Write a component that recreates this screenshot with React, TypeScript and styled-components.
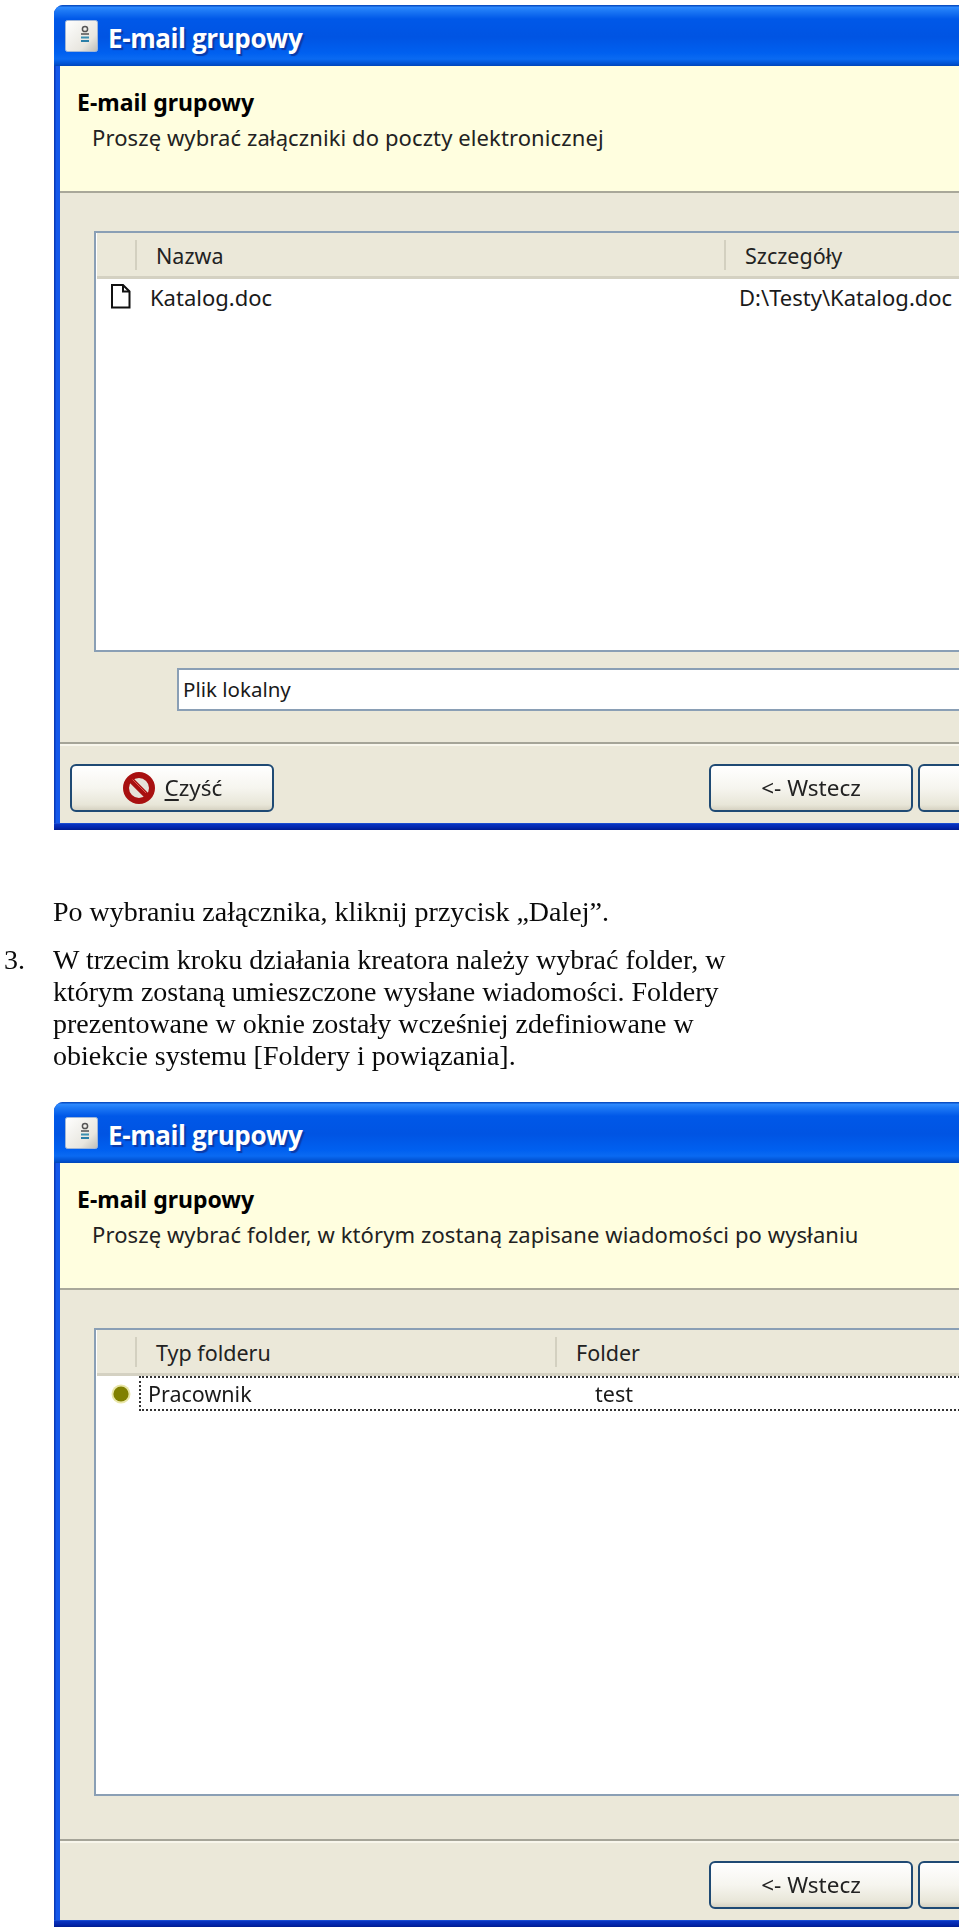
import React from "react";
import styled, { createGlobalStyle } from "styled-components";

const Global = createGlobalStyle`
  html, body { margin: 0; padding: 0; background: #fff; }
  #root { width: 960px; height: 1932px; overflow: hidden; }
`;

const Page = styled.div`
  width: 960px;
  padding-top: 5px;
`;

const Window = styled.section`
  width: 905px;
  height: 825px;
  margin-left: 54px;
  display: flex;
  flex-direction: column;
  overflow: hidden;
  border-radius: 9px 0 0 0;
  background: linear-gradient(90deg, #0a3ab8 0, #0a3ab8 1px, #1558ea 2px, #1558ea 6px);
  font-family: "Noto Sans", sans-serif;
  color: #111;
  filter: blur(0.35px);
`;

const TitleBar = styled.header`
  height: 61px;
  flex: none;
  display: flex;
  align-items: center;
  gap: 10px;
  padding: 1px 0 0 11px;
  box-sizing: border-box;
  background: linear-gradient(
    180deg,
    #0a4fc4 0,
    #0a4fc4 1px,
    #2f8bff 2px,
    #1c78f5 6px,
    #0058e8 14px,
    #0054e3 32px,
    #0060f0 48px,
    #0a6af2 54px,
    #0050d0 59px,
    #0046b8 61px
  );
`;

const TitleText = styled.h1`
  margin: 4px 0 0;
  font: 700 26px/1 "Open Sans", sans-serif;
  letter-spacing: -0.4px;
  color: #fff;
  text-shadow: 2px 2px 1px #0a3aa8;
`;

const Client = styled.div`
  flex: 1;
  min-height: 0;
  display: flex;
  flex-direction: column;
  margin-left: 6px;
  background: #ebe8d9;
`;

const BottomEdge = styled.div`
  height: 7px;
  flex: none;
  background: linear-gradient(180deg, #2a62e0 0, #0a35c0 1px, #0428b0 4px, #001c90 7px);
`;

const Banner = styled.div`
  height: 127px;
  flex: none;
  box-sizing: border-box;
  padding: 23px 0 0 17px;
  background: #fffedf;
  border-bottom: 2px solid #a9a89a;
`;

const BannerTitle = styled.h2`
  margin: 0;
  font: 700 23px/26px "Noto Sans", sans-serif;
  color: #000;
`;

const BannerText = styled.p`
  margin: 9px 0 0 15px;
  font: 400 22px/26px "Noto Sans", sans-serif;
  letter-spacing: 0.1px;
  color: #222;
`;

const Body = styled.div<{ $bottom: number }>`
  flex: 1;
  min-height: 0;
  display: flex;
  flex-direction: column;
  padding: 38px 0 ${(p) => p.$bottom}px 34px;
  border-bottom: 2px solid #a5a498;
  width: 920px;
  box-sizing: border-box;
`;

const ListView = styled.div`
  flex: 1;
  min-height: 0;
  box-sizing: border-box;
  border: 2px solid #8a9fb5;
  border-right: 0;
  padding-left: 1px;
  background: #fff;
`;

const Row = styled.div<{ $cols: string }>`
  display: grid;
  grid-template-columns: ${(p) => p.$cols};
  align-items: center;
`;

const HeaderRow = styled(Row)`
  height: 43px;
  background: #ebe8d9;
  border-bottom: 3px solid #d4d1c2;
  box-sizing: content-box;
`;

const HeaderCell = styled.div`
  height: 30px;
  box-sizing: border-box;
  border-left: 2px solid #d3d0c0;
  padding-left: 19px;
  font: 400 21.5px/32px "Noto Sans", sans-serif;
  color: #222;
  white-space: nowrap;
`;

const HeaderBlank = styled.div`
  height: 30px;
`;

const BodyRow = styled(Row)`
  height: 35px;
  font: 400 22px/30px "Noto Sans", sans-serif;
  color: #1a1a1a;
  white-space: nowrap;
`;

const IconCell = styled.div`
  display: flex;
  justify-content: flex-start;
  padding-left: 14px;
`;

const TextCell = styled.div<{ $pad: number }>`
  padding-left: ${(p) => p.$pad}px;
`;

const FocusedCell = styled.div`
  border: 2px dotted #333;
  height: 35px;
  box-sizing: border-box;
  display: grid;
  grid-template-columns: 420px 1fr;
  align-items: center;
  margin-left: 4px;
  width: 900px;
  font-size: 21.5px;
`;

const Field = styled.div`
  height: 43px;
  flex: none;
  margin: 16px 0 0 83px;
  box-sizing: border-box;
  padding-left: 4px;
  background: #fff;
  border: 2px solid #8a9fb5;
  border-right: 0;
  font: 400 20.5px/39px "Noto Sans", sans-serif;
  color: #1a1a1a;
`;

const Footer = styled.div`
  height: 79px;
  flex: none;
  box-sizing: border-box;
  padding: 18px 0 0 10px;
  display: grid;
  grid-template-columns: 634px 204px 204px;
  column-gap: 5px;
  align-items: start;
  border-top: 2px solid #f8f6ec;
`;

const Button = styled.button<{ $col: number }>`
  grid-column: ${(p) => p.$col};
  width: 204px;
  height: 48px;
  padding: 0;
  display: flex;
  align-items: center;
  justify-content: center;
  gap: 9px;
  border: 2px solid #1f4a74;
  border-radius: 6px;
  background: linear-gradient(180deg, #ffffff 0, #f6f5ef 50%, #e8e6d8 88%, #d6d2c2 100%);
  font: 400 22.5px/1 "Noto Sans", sans-serif;
  color: #222;
`;

const Underlined = styled.span`
  text-decoration: underline;
  text-underline-offset: 3px;
`;

const Prose = styled.div`
  margin-top: 66px;
  height: 206px;
  font: 400 28px/32px "Liberation Serif", serif;
  color: #0a0a0a;
  filter: blur(0.3px);
`;

const Paragraph = styled.p`
  margin: 0 0 16px 53px;
`;

const Step = styled.div`
  display: grid;
  grid-template-columns: 53px 690px;
`;

const StepNumber = styled.span`
  padding-left: 4px;
`;

const AppIcon = () => (
  <svg width="33" height="32" viewBox="0 0 33 32">
    <defs>
      <linearGradient id="ai" x1="0" y1="0" x2="1" y2="1">
        <stop offset="0" stopColor="#ffffff" />
        <stop offset="0.7" stopColor="#e8e6df" />
        <stop offset="1" stopColor="#bdbdb8" />
      </linearGradient>
    </defs>
    <rect x="0.5" y="0.5" width="32" height="31" rx="2" fill="url(#ai)" stroke="#9fb6d8" />
    <circle cx="20" cy="9" r="2.6" fill="none" stroke="#555" strokeWidth="1.5" />
    <rect x="16" y="13" width="8" height="2" fill="#777" />
    <rect x="16" y="16.5" width="8" height="2" fill="#3b8fb0" />
    <rect x="16" y="20" width="8" height="2" fill="#2a7fa8" />
  </svg>
);

const FileIcon = () => (
  <svg width="20" height="25" viewBox="0 0 20 25">
    <path d="M1 1H12L18.5 7.5V23.5H1Z" fill="#fff" stroke="#111" strokeWidth="2" />
    <path d="M12 1V7.5H18.5" fill="none" stroke="#111" strokeWidth="2" />
  </svg>
);

const BanIcon = () => (
  <svg width="34" height="34" viewBox="0 0 34 34">
    <circle cx="17" cy="17" r="13" fill="#e6e2d8" stroke="#a81010" strokeWidth="6" />
    <path d="M8 8L26 26" stroke="#a81010" strokeWidth="6" />
    <path d="M10.5 8.5L24 22" stroke="#e05a50" strokeWidth="1" />
  </svg>
);

const BulletIcon = () => (
  <svg width="20" height="20" viewBox="0 0 20 20">
    <circle cx="10" cy="10" r="9.5" fill="#e9e6a8" />
    <circle cx="10" cy="10" r="7.6" fill="#808000" />
  </svg>
);

const WizardWindow: React.FC<{
  subtitle: string;
  children: React.ReactNode;
  clear?: boolean;
  bodyBottom: number;
}> = ({ subtitle, children, clear, bodyBottom }) => (
  <Window>
    <TitleBar>
      <AppIcon />
      <TitleText>E-mail grupowy</TitleText>
    </TitleBar>
    <Client>
      <Banner>
        <BannerTitle>E-mail grupowy</BannerTitle>
        <BannerText>{subtitle}</BannerText>
      </Banner>
      <Body $bottom={bodyBottom}>{children}</Body>
      <Footer>
        {clear && (
          <Button $col={1}>
            <BanIcon />
            <span>
              <Underlined>C</Underlined>zyść
            </span>
          </Button>
        )}
        <Button $col={2}>{"<- Wstecz"}</Button>
        <Button $col={3} />
      </Footer>
    </Client>
    <BottomEdge />
  </Window>
);

const FILE_COLS = "38px 589px 1fr";
const FOLDER_COLS = "38px 420px 1fr";

export default function App() {
  return (
    <Page>
      <Global />
      <WizardWindow subtitle="Proszę wybrać załączniki do poczty elektronicznej" clear bodyBottom={31}>
        <ListView>
          <HeaderRow $cols={FILE_COLS}>
            <HeaderBlank />
            <HeaderCell>Nazwa</HeaderCell>
            <HeaderCell>Szczegóły</HeaderCell>
          </HeaderRow>
          <BodyRow $cols={FILE_COLS}>
            <IconCell>
              <FileIcon />
            </IconCell>
            <TextCell $pad={15}>Katalog.doc</TextCell>
            <TextCell $pad={15}>D:\Testy\Katalog.doc</TextCell>
          </BodyRow>
        </ListView>
        <Field>Plik lokalny</Field>
      </WizardWindow>
      <Prose>
        <Paragraph>Po wybraniu załącznika, kliknij przycisk „Dalej”.</Paragraph>
        <Step>
          <StepNumber>3.</StepNumber>
          <span>
            W trzecim kroku działania kreatora należy wybrać folder, w którym zostaną umieszczone
            wysłane wiadomości. Foldery prezentowane w oknie zostały wcześniej zdefiniowane w
            obiekcie systemu [Foldery i powiązania].
          </span>
        </Step>
      </Prose>
      <WizardWindow
        subtitle="Proszę wybrać folder, w którym zostaną zapisane wiadomości po wysłaniu"
        bodyBottom={43}
      >
        <ListView>
          <HeaderRow $cols={FOLDER_COLS}>
            <HeaderBlank />
            <HeaderCell>Typ folderu</HeaderCell>
            <HeaderCell>Folder</HeaderCell>
          </HeaderRow>
          <BodyRow $cols="38px 1fr">
            <IconCell>
              <BulletIcon />
            </IconCell>
            <FocusedCell>
              <TextCell $pad={7}>Pracownik</TextCell>
              <TextCell $pad={34}>test</TextCell>
            </FocusedCell>
          </BodyRow>
        </ListView>
      </WizardWindow>
    </Page>
  );
}
